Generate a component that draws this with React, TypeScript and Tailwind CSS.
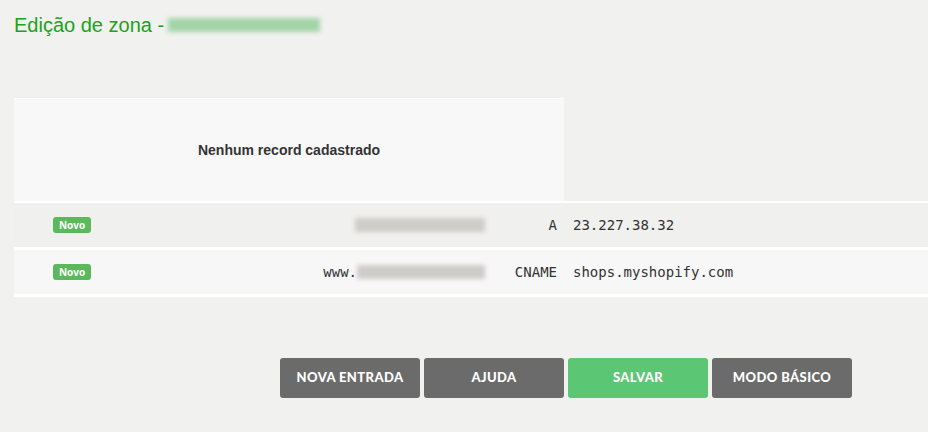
const Blur = ({ w, tone }: { w: number; tone: "gray" | "green" }) => (
  <span
    className={
      "inline-block h-[14px] align-middle blur-[2px] " +
      (tone === "green" ? "bg-[#a3d5a8]" : "bg-[#cfcdca]")
    }
    style={{ width: w }}
  />
);

const rows = [
  { prefix: "", name: 130, type: "A", value: "23.227.38.32", bg: "bg-[#f0f0ee]" },
  { prefix: "www.", name: 128, type: "CNAME", value: "shops.myshopify.com", bg: "bg-[#f7f7f7]" },
];

const App = () => {
  return (
    <div className="w-[928px] h-[432px] bg-[#f1f1ef] overflow-hidden font-['Liberation_Sans',Arial,sans-serif] text-[#333]">
      {/* Title */}
      <h1 className="pl-[14px] pt-[11px] text-[20px] leading-[28px] text-[#1aa31c] flex items-center gap-[4px]">
        <span>Edição de zona -</span>
        <Blur w={152} tone="green" />
      </h1>

      {/* Table */}
      <div className="mt-[59px] pl-[14px]">
        <div className="w-[550px] h-[103px] bg-[#f8f8f8] border-t border-white flex items-center justify-center">
          <span className="font-bold text-[14px]">Nenhum record cadastrado</span>
        </div>
        <div className="border-t-2 border-white">
          {rows.map((r, i) => (
            <div
              key={i}
              className={`${r.bg} h-[47px] border-b-[3px] border-white grid grid-cols-[116px_355px_72px_1fr] items-center font-['DejaVu_Sans_Mono',monospace] text-[14px]`}
            >
              <div className="flex justify-center">
                <span className="bg-[#5cb85c] text-white font-['Open_Sans',sans-serif] font-bold text-[10px] leading-[16px] px-[6px] rounded-[3px]">
                  Novo
                </span>
              </div>
              <div className="flex justify-end items-center">
                {r.prefix && <span>{r.prefix}</span>}
                <Blur w={r.name} tone="gray" />
              </div>
              <div className="text-right">{r.type}</div>
              <div className="pl-[16px]">{r.value}</div>
            </div>
          ))}
        </div>
      </div>

      {/* Actions */}
      <div className="mt-[61px] pl-[280px] flex gap-[4px] font-['Lato',sans-serif] font-black text-[13px] tracking-[0.4px] text-white">
        <button className="w-[140px] h-[40px] rounded-[3px] bg-[#6b6b6b]">NOVA ENTRADA</button>
        <button className="w-[140px] h-[40px] rounded-[3px] bg-[#6b6b6b]">AJUDA</button>
        <button className="w-[140px] h-[40px] rounded-[3px] bg-[#5bc774]">SALVAR</button>
        <button className="w-[140px] h-[40px] rounded-[3px] bg-[#6b6b6b]">MODO BÁSICO</button>
      </div>
    </div>
  );
};

export default App;
